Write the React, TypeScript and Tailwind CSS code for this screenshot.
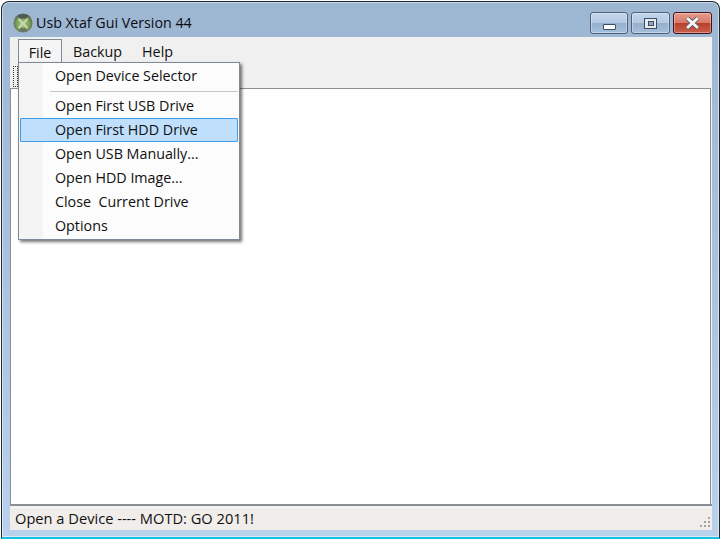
import { ReactNode } from "react";

const font = { fontFamily: '"Open Sans", "Noto Sans", sans-serif' };

const XboxIcon = () => (
  <svg width="20" height="20" viewBox="0 0 20 20">
    <defs>
      <radialGradient id="orb" cx="50%" cy="55%" r="55%">
        <stop offset="0%" stopColor="#a9cc84" />
        <stop offset="60%" stopColor="#7aa356" />
        <stop offset="100%" stopColor="#5c665c" />
      </radialGradient>
    </defs>
    <circle cx="10" cy="10" r="9.5" fill="url(#orb)" />
    <path d="M4 2.5 A9.5 6 0 0 1 16 2.5 L13 5.5 L7 5.5 Z" fill="#4f5a55" />
    <path d="M5 18 A9.5 6 0 0 0 15 18 L12 15 L8 15 Z" fill="#6a7568" />
    <path d="M5.5 6 L10 10.5 L14.5 6 M5.5 15 L10 10.5 L14.5 15" stroke="#c6d8b2" strokeWidth="2" fill="none" />
  </svg>
);

const CaptionButton = ({ children, className }: { children: ReactNode; className: string }) => (
  <div className={`flex h-[22px] items-center justify-center overflow-hidden rounded-[3px] border shadow-[inset_0_0_0_1px_rgba(255,255,255,0.35)] ${className}`}>
    {children}
  </div>
);

const MenuItem = ({ label, active }: { label: string; active?: boolean }) => (
  <div
    className={
      active
        ? "mx-px flex h-[24px] items-center rounded-[1px] border border-[#3d9be8] bg-[#bfdffc] pl-[34px] text-[14.3px] whitespace-pre text-[#101010]"
        : "mx-px flex h-[24px] items-center pl-[35px] text-[14.3px] whitespace-pre text-[#101010]"
    }
  >
    {label}
  </div>
);

export default function App() {
  return (
    <div className="h-[540px] w-[721px] overflow-hidden bg-white pt-px pr-px pl-px" style={font}>
      <div className="flex h-[538px] flex-col rounded-t-[8px] border border-[#1d2a33] border-b-2 border-b-[#10c4e0] bg-gradient-to-b from-[#9db6d2] via-[#a9c3de] to-[#b9d1ea] pr-[7px] pb-[7px] pl-[8px] shadow-[inset_0_0_0_1px_rgba(255,255,255,0.5)]">
        <div className="flex h-[35px] shrink-0 items-start">
          <div className="mt-[10px] ml-[3px] flex items-center gap-[3px]">
            <XboxIcon />
            <span className="text-[14.25px] text-[#0c0c14]">Usb Xtaf Gui Version 44</span>
          </div>
          <div className="mt-[10px] ml-auto flex gap-[3px]">
            <CaptionButton className="w-[38px] border-[#4f6079] bg-[linear-gradient(#c3d5ea_0%,#b4cae3_48%,#94afcb_50%,#a6c0dc_100%)]">
              <div className="mt-[7px] h-[6px] w-[13px] rounded-[1px] border border-[#3c4d66] bg-white" />
            </CaptionButton>
            <CaptionButton className="w-[39px] border-[#4f6079] bg-[linear-gradient(#c3d5ea_0%,#b4cae3_48%,#94afcb_50%,#a6c0dc_100%)]">
              <div className="flex h-[11px] w-[13px] items-center justify-center border border-[#3c4d66] bg-[#e8eaee]">
                <div className="h-[5px] w-[6px] border border-[#3c4d66] bg-[#8fa8c6]" />
              </div>
            </CaptionButton>
            <CaptionButton className="w-[39px] border-[#46101a] bg-[linear-gradient(#e59a8c_0%,#d97a68_48%,#b9402a_50%,#c9604a_100%)]">
              <svg width="17" height="14" viewBox="0 0 15 13">
                <path d="M2.5 2 L12.5 11 M12.5 2 L2.5 11" stroke="#4a5166" strokeWidth="4.2" />
                <path d="M2.5 2 L12.5 11 M12.5 2 L2.5 11" stroke="#f4f4f6" strokeWidth="2.6" />
              </svg>
            </CaptionButton>
          </div>
        </div>

        <div className="relative flex min-h-0 flex-1 flex-col bg-[#f0f0f0]">
          {/* menu bar */}
          <div className="flex h-[28px] shrink-0 items-start pt-[2px] pl-[8px] text-[14.3px] text-[#101010]">
            <div className="flex h-[24px] w-[44px] items-center justify-center border border-b-0 border-[#7f8a96] bg-[#f5f5f5] pt-[2px]">File</div>
            <span className="flex h-[24px] items-center pt-[2px] pl-[11px]">Backup</span>
            <span className="flex h-[24px] items-center pt-[2px] pl-[20px]">Help</span>
          </div>
          <div className="h-[23px] shrink-0 pt-[1px] pl-[3px]">
            <div className="h-[21px] w-[5px] border border-dotted border-[#333]" />
          </div>

          <div className="mr-px min-h-0 flex-1 border border-b-0 border-[#8b8f96] bg-white" />
          <div className="h-[2px] shrink-0 bg-[#8b8f96]" />

          {/* status bar */}
          <div className="relative mt-[1px] flex h-[23px] shrink-0 items-center border-t border-[#f8f8f8] bg-[#f0edeb] pl-[5px] text-[14.65px] text-[#101010]">
            Open a Device ---- MOTD: GO 2011!
            <svg className="absolute right-[2px] bottom-[3px]" width="10" height="10" viewBox="0 0 10 10" fill="#a3a3a3">
              <rect x="8" y="0" width="2" height="2" />
              <rect x="4" y="4" width="2" height="2" />
              <rect x="8" y="4" width="2" height="2" />
              <rect x="0" y="8" width="2" height="2" />
              <rect x="4" y="8" width="2" height="2" />
              <rect x="8" y="8" width="2" height="2" />
            </svg>
          </div>

          {/* File dropdown */}
          <div className="absolute top-[25px] left-[8px] z-10 w-[222px] border border-[#7f8a96] bg-[linear-gradient(90deg,#f4f4f4_0,#f4f4f4_24px,#fcfcfc_24px)] py-px shadow-[2px_2px_3px_rgba(0,0,0,0.55)]">
            <MenuItem label="Open Device Selector" />
            <div className="mt-[3px] mr-px mb-[2px] ml-[31px] h-px bg-[#c4c4c4]" />
            <MenuItem label="Open First USB Drive" />
            <MenuItem label="Open First HDD Drive" active />
            <MenuItem label="Open USB Manually..." />
            <MenuItem label="Open HDD Image..." />
            <MenuItem label="Close  Current Drive" />
            <MenuItem label="Options" />
          </div>
        </div>
      </div>
    </div>
  );
}
